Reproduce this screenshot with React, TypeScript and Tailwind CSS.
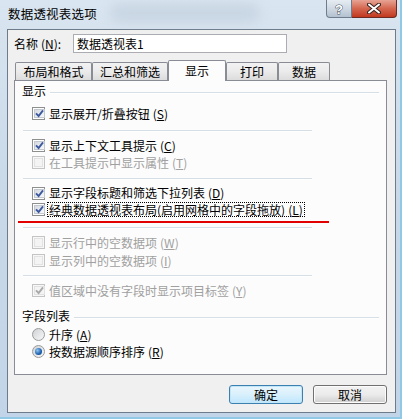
import React from "react";

const FONT = { fontFamily: '"Noto Sans CJK SC", "Liberation Sans", sans-serif' };

function Mn({ k }: { k: string }) {
  return (
    <span className="ml-[3px]">
      (<u>{k}</u>)
    </span>
  );
}

function Check({ checked, disabled }: { checked?: boolean; disabled?: boolean }) {
  return (
    <span
      className={`w-[13px] h-[13px] shrink-0 border p-px flex ${
        disabled ? "border-[#c4c4c4] bg-[#f7f7f7]" : "border-[#8e8f8f] bg-white"
      }`}
    >
      <span
        className={`flex-1 flex items-center justify-center border ${
          disabled
            ? "border-[#e2e2e2] bg-[#f4f4f4]"
            : "border-[#c3c8d0] bg-linear-to-br from-[#d5d9df] to-[#fafafa]"
        }`}
      >
        {checked && (
          <svg width="9" height="9" viewBox="0 0 9 9" className="shrink-0">
            <path
              d="M1 4.3 L3.6 7 L8 1.3"
              stroke={disabled ? "#a9a9a9" : "#3c5aa0"}
              strokeWidth="1.9"
              fill="none"
            />
          </svg>
        )}
      </span>
    </span>
  );
}

function Radio({ checked }: { checked?: boolean }) {
  return (
    <span className="w-[13px] h-[13px] shrink-0 rounded-full border border-[#9a9a9a] bg-linear-to-br from-[#cfd2d6] to-[#f8f8f8] flex items-center justify-center">
      {checked && (
        <span className="w-[7px] h-[7px] rounded-full bg-[radial-gradient(circle_at_35%_35%,#8fc6f2,#1b5fae_60%,#0f3f80)]" />
      )}
    </span>
  );
}

function Row({
  children,
  checked,
  disabled,
  radio,
  focus,
  className = "",
}: {
  children: React.ReactNode;
  checked?: boolean;
  disabled?: boolean;
  radio?: boolean;
  focus?: boolean;
  className?: string;
}) {
  return (
    <div className={`h-[17px] flex items-center pl-[17px] ${className}`}>
      {radio ? <Radio checked={checked} /> : <Check checked={checked} disabled={disabled} />}
      <span
        className={`ml-[3px] pl-px pr-px h-[13px] flex items-center leading-none whitespace-nowrap ${
          disabled ? "text-[#a0a0a0]" : "text-black"
        } ${focus ? "outline outline-1 outline-dotted outline-black" : ""}`}
      >
        {children}
      </span>
    </div>
  );
}

function Sep({ className = "" }: { className?: string }) {
  return (
    <div className={`ml-[8px] w-[289px] h-[2px] flex flex-col ${className}`}>
      <div className="h-px bg-[#d5dfe5]" />
      <div className="h-px bg-white" />
    </div>
  );
}

function GroupLabel({ text, className = "" }: { text: string; className?: string }) {
  return (
    <div className={`h-[17px] flex items-center pl-[7px] pr-[7px] ${className}`}>
      <span className="leading-none whitespace-nowrap">{text}</span>
      <div className="flex-1 ml-[4px] mt-[5px] flex flex-col">
        <div className="h-px bg-[#d5dfe5]" />
        <div className="h-px bg-white" />
      </div>
    </div>
  );
}

function Tab({ label, w, selected }: { label: string; w: string; selected?: boolean }) {
  return (
    <div
      className={`${w} flex items-center justify-center border border-b-0 border-[#898c95] rounded-t-[2px] ${
        selected
          ? "h-[21px] bg-[#fcfcfc] -mb-px z-10 relative"
          : "h-[18px] bg-linear-to-b from-[#f2f2f2] via-[#ebebeb] to-[#dcdcdc]"
      }`}
    >
      <span className="leading-none">{label}</span>
    </div>
  );
}

function Btn({ label, def }: { label: string; def?: boolean }) {
  return (
    <button
      className={`w-[74px] h-[19px] rounded-[3px] border flex items-center justify-center leading-none ${
        def
          ? "border-[#3c7fb1] bg-linear-to-b from-[#eaf6fd] via-[#d9f0fc] to-[#bee6fd] shadow-[inset_0_0_0_1px_#c0e6f8]"
          : "border-[#707070] bg-linear-to-b from-[#f2f2f2] via-[#ebebeb] to-[#cfcfcf] shadow-[inset_0_0_0_1px_#fcfcfc]"
      }`}
    >
      {label}
    </button>
  );
}

export default function App() {
  return (
    <div
      className="w-[402px] h-[419px] flex flex-col bg-linear-to-b from-[#d9e5f0] via-[#c8d8e8] to-[#c2d5e8] border-r-2 border-b-2 border-[#8fc9e6] text-[12px] overflow-hidden"
      style={FONT}
    >
      {/* title bar */}
      <div className="h-[29px] shrink-0 flex items-start relative">
        <div className="absolute left-[110px] top-[4px] w-[150px] h-[18px] rounded-full bg-[#b9c7d6] opacity-50 blur-[6px]" />
        <span className="relative mt-[8px] ml-[8px] text-[12.5px] leading-none tracking-[0.2px] text-black">
          数据透视表选项
        </span>
        <div className="ml-auto mr-[3px] flex relative">
          <div className="w-[26px] h-[18px] border border-t-0 border-[#6d7d8d] rounded-bl-[4px] bg-linear-to-b from-[#e6ecf2] via-[#cfd9e3] to-[#b3c1cf] flex items-center justify-center">
            <svg width="10" height="13" viewBox="0 0 10 13">
              <text
                x="5"
                y="11.5"
                textAnchor="middle"
                fontSize="13"
                fontWeight="bold"
                fontFamily="Liberation Sans, sans-serif"
                fill="#ffffff"
                stroke="#4a5666"
                strokeWidth="1"
                paintOrder="stroke"
              >
                ?
              </text>
            </svg>
          </div>
          <div className="w-[45px] h-[18px] border border-t-0 border-l-0 border-[#6b2a24] rounded-br-[4px] bg-linear-to-b from-[#e7a394] via-[#d4664f] to-[#c1361d] flex items-center justify-center">
            <svg width="14" height="11" viewBox="0 0 14 11">
              <path d="M2 1.5 L12 9.5 M12 1.5 L2 9.5" stroke="#3a2420" strokeWidth="4" strokeLinecap="round" />
              <path d="M2 1.5 L12 9.5 M12 1.5 L2 9.5" stroke="#ffffff" strokeWidth="2" strokeLinecap="round" />
            </svg>
          </div>
        </div>
      </div>

      {/* client area */}
      <div className="ml-[7px] w-[389px] h-[384px] shrink-0 bg-[#f0f0f0] border border-[#6d7b8a] flex flex-col pl-[6px]">
        {/* name row */}
        <div className="mt-[4px] h-[19px] flex items-center">
          <span className="leading-none whitespace-nowrap">
            名称<Mn k="N" />:
          </span>
          <div className="ml-auto mr-[108px] w-[214px] h-[19px] border border-[#abadb3] bg-white flex items-center pl-[3px] leading-none">
            数据透视表1
          </div>
        </div>

        {/* tabs */}
        <div className="mt-[7px] h-[20px] flex items-end pl-px">
          <Tab label="布局和格式" w="w-[77px]" />
          <Tab label="汇总和筛选" w="w-[76px]" />
          <Tab label="显示" w="w-[58px]" selected />
          <Tab label="打印" w="w-[52px]" />
          <Tab label="数据" w="w-[52px]" />
        </div>

        {/* panel */}
        <div className="w-[373px] h-[295px] border border-[#898c95] bg-[#fcfcfc] flex flex-col relative">
          <GroupLabel text="显示" className="mt-[1px]" />
          <Row checked className="mt-[6px]">
            显示展开/折叠按钮<Mn k="S" />
          </Row>
          <Sep className="mt-[8px]" />
          <Row checked className="mt-[5px]">
            显示上下文工具提示<Mn k="C" />
          </Row>
          <Row disabled>
            在工具提示中显示属性<Mn k="T" />
          </Row>
          <Sep className="mt-[7px]" />
          <Row checked className="mt-[5px] !h-[16px]">
            显示字段标题和筛选下拉列表<Mn k="D" />
          </Row>
          <Row checked focus>
            经典数据透视表布局(启用网格中的字段拖放)<Mn k="L" />
          </Row>
          {/* red annotation underline */}
          <div className="absolute left-[3px] top-[140px] w-[311px] h-[2px] bg-[#e20000]" />
          <Sep className="mt-[9px]" />
          <Row disabled className="mt-[5px]">
            显示行中的空数据项<Mn k="W" />
          </Row>
          <Row disabled className="mt-px">
            显示列中的空数据项<Mn k="I" />
          </Row>
          <Sep className="mt-[6px]" />
          <Row checked disabled className="mt-[5px]">
            值区域中没有字段时显示项目标签<Mn k="Y" />
          </Row>
          <GroupLabel text="字段列表" className="mt-[8px]" />
          <Row radio className="mt-[2px]">
            升序<Mn k="A" />
          </Row>
          <Row radio checked>
            按数据源顺序排序<Mn k="R" />
          </Row>
        </div>

        {/* buttons */}
        <div className="mt-[10px] w-[373px] flex justify-end gap-[10px]">
          <Btn label="确定" def />
          <Btn label="取消" />
        </div>
      </div>
    </div>
  );
}
